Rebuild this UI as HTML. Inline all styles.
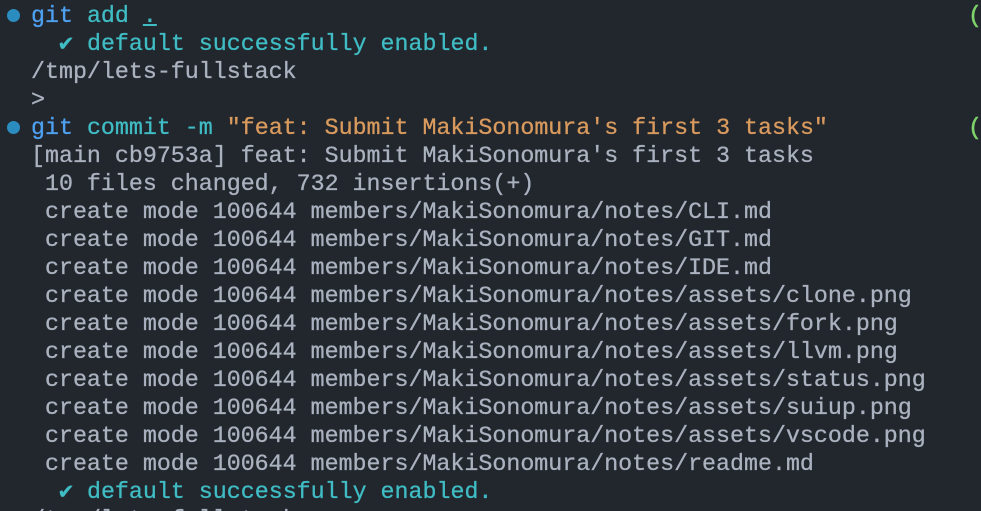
<!DOCTYPE html>
<html><head><meta charset="utf-8"><style>
html,body{margin:0;padding:0;background:#22262d;width:981px;height:511px;overflow:hidden;position:relative}
pre{position:absolute;left:31px;top:2px;margin:0;font-family:"Liberation Mono","DejaVu Sans Mono",monospace;font-size:23.3px;line-height:28px;color:#abb2bf;white-space:pre;-webkit-text-stroke:0.3px currentColor}
.b{color:#4fa0f0}.c{color:#3fbcc4}.o{color:#d99a5e}.u{text-decoration:underline}
.dot{position:absolute;left:7px;width:13px;height:13px;border-radius:50%;background:#2a8cbf}
.g{position:absolute;left:968px;font-family:"Liberation Mono",monospace;font-size:23.3px;line-height:28px;color:#7fd36a;-webkit-text-stroke:0.5px currentColor}
</style></head><body>
<div class="dot" style="top:9px"></div>
<div class="dot" style="top:121px"></div>
<div class="g" style="top:2px">(</div>
<div class="g" style="top:114px">(</div>
<pre><span class="b">git</span> <span class="c">add <span class="u">.</span></span>
<span class="c">  ✔ default successfully enabled.</span>
/tmp/lets-fullstack
&gt;
<span class="b">git</span> <span class="c">commit -m</span> <span class="o">"feat: Submit MakiSonomura's first 3 tasks"</span>
[main cb9753a] feat: Submit MakiSonomura's first 3 tasks
 10 files changed, 732 insertions(+)
 create mode 100644 members/MakiSonomura/notes/CLI.md
 create mode 100644 members/MakiSonomura/notes/GIT.md
 create mode 100644 members/MakiSonomura/notes/IDE.md
 create mode 100644 members/MakiSonomura/notes/assets/clone.png
 create mode 100644 members/MakiSonomura/notes/assets/fork.png
 create mode 100644 members/MakiSonomura/notes/assets/llvm.png
 create mode 100644 members/MakiSonomura/notes/assets/status.png
 create mode 100644 members/MakiSonomura/notes/assets/suiup.png
 create mode 100644 members/MakiSonomura/notes/assets/vscode.png
 create mode 100644 members/MakiSonomura/notes/readme.md
<span class="c">  ✔ default successfully enabled.</span>
/tmp/lets-fullstack</pre>
</body></html>
